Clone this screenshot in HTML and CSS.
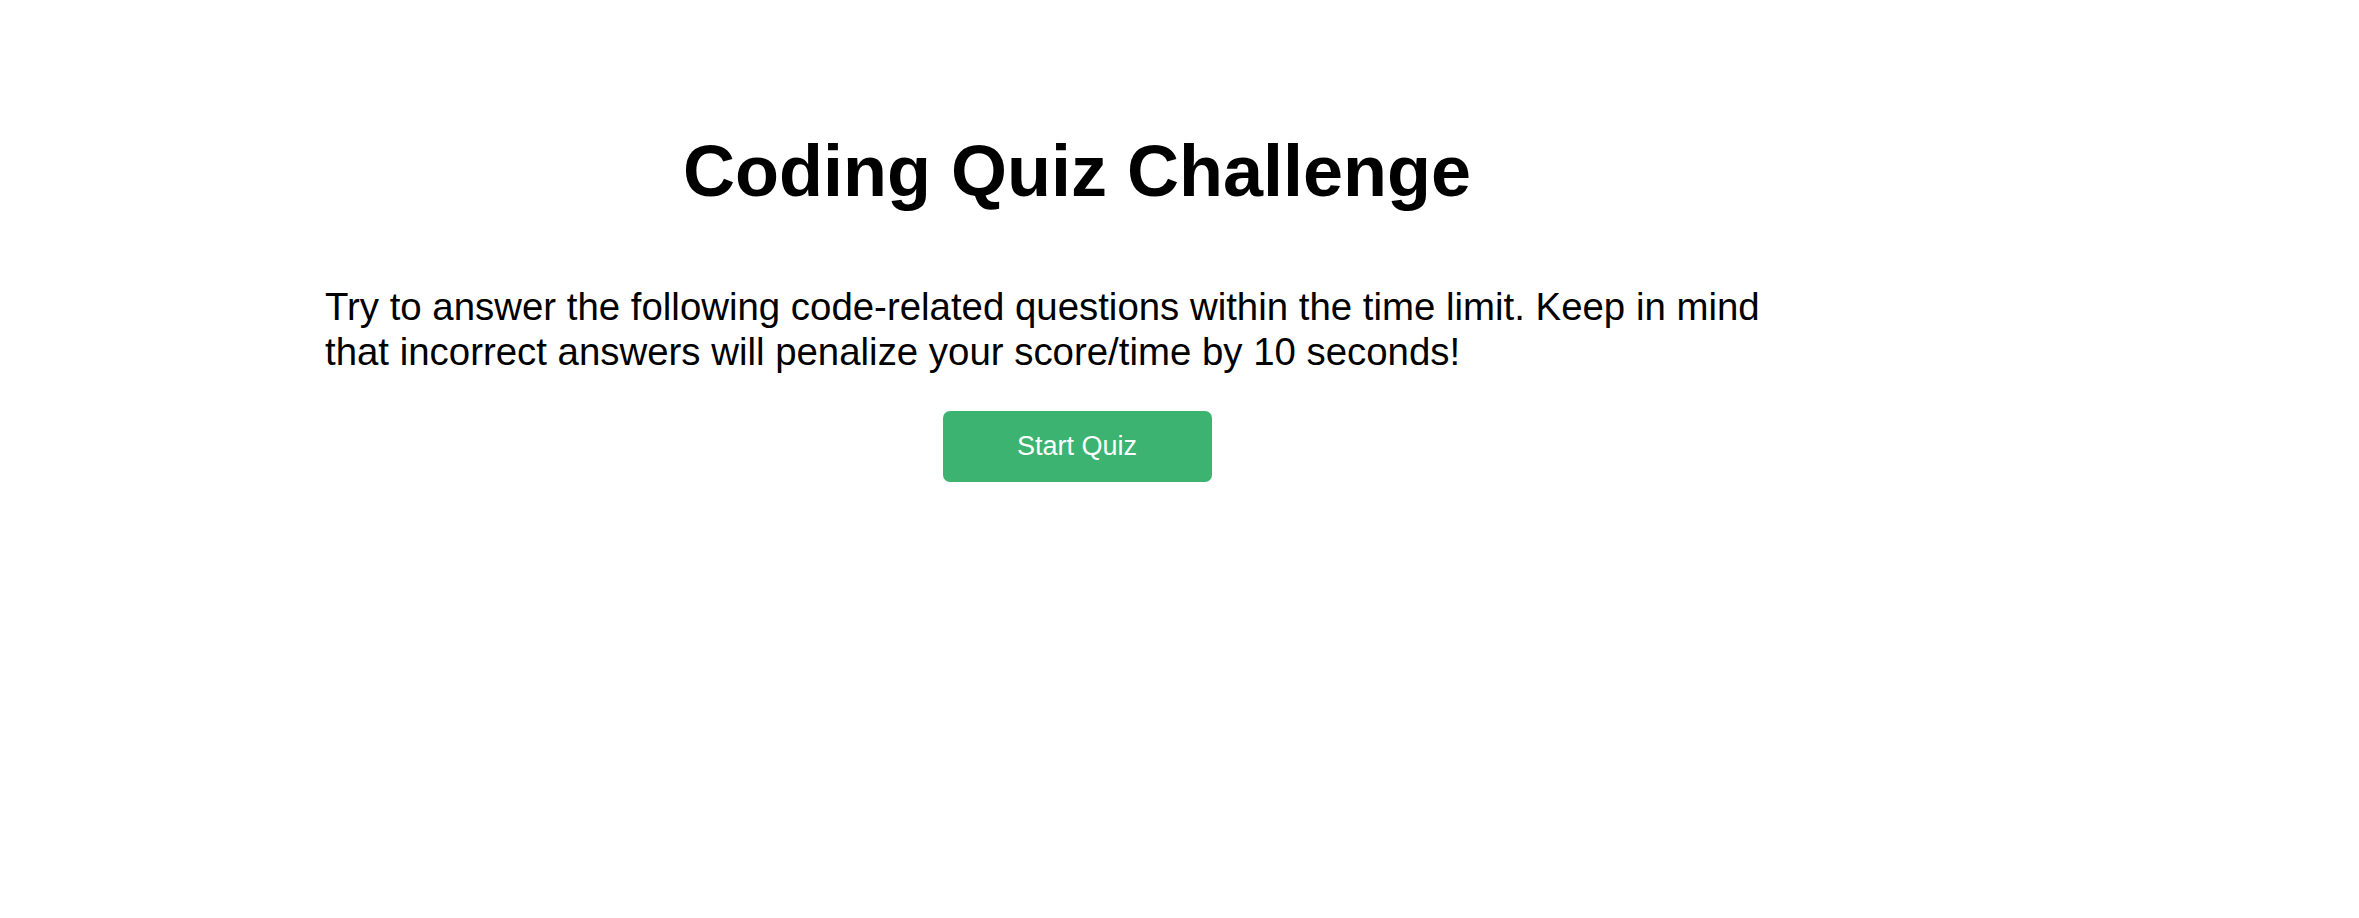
FILE: index.html
```html
<!DOCTYPE html>
<html lang="en">
<head>
<meta charset="utf-8">
<title>Coding Quiz Challenge</title>
<link rel="stylesheet" href="styles.css">
</head>
<body>
<main class="quiz">
  <h1 class="quiz-title">Coding Quiz Challenge</h1>
  <p class="quiz-intro">Try to answer the following code-related questions within the time limit. Keep in mind that incorrect answers will penalize your score/time by 10 seconds!</p>
  <div class="quiz-actions">
    <button class="start-btn" type="button">Start Quiz</button>
  </div>
</main>
</body>
</html>
```
FILE: styles.css
```css
html, body {
  margin: 0;
  padding: 0;
  background: #ffffff;
}

body {
  font-family: "Liberation Sans", Arial, sans-serif;
  color: #000000;
}

.quiz {
  width: 1504px;
  margin-left: 325px;
  padding-top: 130px;
  display: flex;
  flex-direction: column;
}

.quiz-title {
  margin: 0;
  font-size: 72px;
  font-weight: bold;
  text-align: center;
}

.quiz-intro {
  margin: 72px 0 0 0;
  font-size: 38.4px;
  line-height: 45px;
}

.quiz-actions {
  display: flex;
  justify-content: center;
  margin-top: 37px;
}

.start-btn {
  width: 269px;
  height: 71px;
  border: none;
  border-radius: 7px;
  background: #3cb371;
  color: #ffffff;
  font-family: "Liberation Sans", Arial, sans-serif;
  font-size: 27px;
  cursor: pointer;
}
```
